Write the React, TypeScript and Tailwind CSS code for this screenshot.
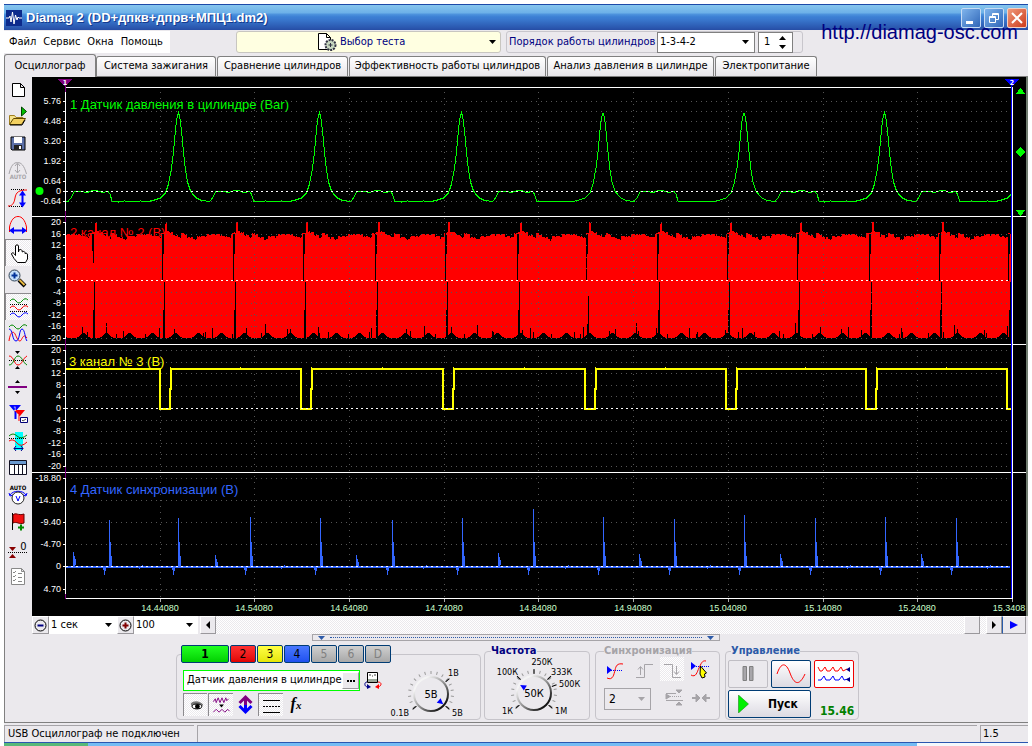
import { useState, type ReactNode } from 'react'

const UI = "font-['DejaVu_Sans_Condensed','DejaVu_Sans',sans-serif]"
const DITHER = 'bg-[conic-gradient(#fff_25%,#ebe9ed_0_50%,#fff_0_75%,#ebe9ed_0)] bg-[length:2px_2px]'
const UI_FONT = '"DejaVu Sans Condensed", "DejaVu Sans", sans-serif'
const CHART_FONT = '"Liberation Sans", Arial, sans-serif'

// ---- signals ----

const GREEN_PEAKS = [37, 178.5, 319.5, 461.5, 603, 744, 884.5, 1025.5]

// one engine cycle, offsets are relative to the pressure peak
const GREEN_CYCLE: [number, number][] = [
  [-66, 201], [-60, 202], [-54, 201], [-46, 202], [-38, 201], [-30, 201.5], [-24, 200], [-18, 198],
  [-13, 193], [-10, 184], [-7, 168], [-5, 152], [-3, 130], [-2, 121], [-1, 116], [0, 113],
  [1, 116], [2, 122], [3, 131], [5, 152], [7, 170], [9, 182], [12, 191],
  [15, 195], [18, 198], [23, 200.5], [31, 201.5], [34, 198], [37, 192], [40, 191.5], [47, 192],
  [50, 192.5], [56, 190.5], [60, 190.5], [65, 192.5], [71, 191.5], [73, 194], [75, 201],
]

const greenPath = GREEN_PEAKS.map((p) => GREEN_CYCLE.map(([dx, y]) => `${p + dx},${y}`).join(' ')).join(' ')

const SPARKS = [95, 165, 236, 306, 378, 448, 520, 589, 660, 730, 800, 872, 942, 1011]

const RED_TOP: [number, number][] = [
  [0, 222], [2, 231], [4, 232], [8, 235], [13, 237], [16, 233], [19, 234], [22, 237], [28, 239],
  [32, 236], [36, 236], [42, 234], [52, 234], [57, 236], [62, 237], [66, 233], [69, 232],
]

function redTopAt(x: number) {
  let s = 24
  for (const v of SPARKS) if (v <= x) s = v
  const off = x - s
  let y = 236
  for (const [dx, v] of RED_TOP) if (off >= dx) y = v
  return y + ((x * 7) % 5 === 0 ? 1 : 0) + ((x * 13) % 11 === 0 ? 1 : 0)
}

function redBottomAt(x: number) {
  const phase = (((x - 95) % 23) + 23) % 23
  let y = 338
  if (phase > 4 && phase < 18) y = 338 - [1, 1, 2, 3, 4, 5, 5, 5, 4, 3, 2, 1, 1][phase - 5]
  if ((x * 37) % 53 === 0) y -= 10
  if ((x * 17) % 29 === 0) y -= 4
  if ((x * 23) % 41 === 0) y -= 6
  return y
}

const redColumns = Array.from({ length: 945 }, (_, i) => {
  const x = 66 + i
  const top = redTopAt(x)
  return `M${x} ${top}h1V${redBottomAt(x)}h-1z`
}).join('')

const BLUE_SPIKES: [number, number][] = [
  [109, 520], [178, 518], [250, 517], [320, 518], [392, 520], [462, 518], [533, 509], [603, 517],
  [674, 519], [744, 515], [815, 518], [885, 517], [956, 518],
]
const BLUE_BUMPS: [number, number][] = [
  [73, 552], [215, 555], [356, 555], [498, 553], [639, 554], [780, 554], [921, 554],
]
const BLUE_NOTCHES = [142, 284, 426, 568, 710, 850, 990]
const bluePath =
  BLUE_SPIKES.map(([x, y]) => `M${x} 567V${y}h1V542h1V556h1V567zM${x - 6} 567v3h1v5h1v-4h1v-4z`).join('') +
  BLUE_BUMPS.map(([x, y]) => `M${x} 567V${y}h1v4h1v3h1v5z`).join('') +
  BLUE_NOTCHES.map((x) => `M${x} 567v-2h1v2zM${x - 3} 567v2h1v-2z`).join('')

const YELLOW_DROPS = [160, 301, 443, 585, 726, 866, 1007]
const yellowPath =
  'M66 369' +
  YELLOW_DROPS.map((x) => {
    const lead = `L${x - 60} 369V368.5L${x - 50} 369H${x}V408.5`
    return x > 1000 ? `${lead}h4` : `${lead}h10V389h1V368.5L${x + 30} 369`
  }).join('')

const twentyScale = (zero: number) =>
  [20, 16, 12, 8, 4, 0, -4, -8, -12, -16, -20].map((v) => ({ text: String(v), y: Math.round(zero - v * 2.9) }))

const AXES = [
  {
    labels: [
      { text: '5.76', y: 101 }, { text: '4.48', y: 121 }, { text: '3.20', y: 141 }, { text: '1.92', y: 161 },
      { text: '0.64', y: 181 }, { text: '0', y: 191 }, { text: '-0.64', y: 201 },
    ],
    rows: [101, 111, 121, 131, 141, 151, 161, 171, 181, 191, 201],
    zero: 191,
  },
  { labels: twentyScale(280), rows: twentyScale(280).map((l) => l.y), zero: 280 },
  { labels: twentyScale(408), rows: twentyScale(408).map((l) => l.y), zero: 408 },
  {
    labels: [
      { text: '-18.80', y: 478 }, { text: '-14.10', y: 500 }, { text: '-9.40', y: 522 },
      { text: '-4.70', y: 544 }, { text: '0', y: 566 }, { text: '4.70', y: 589 },
    ],
    rows: [478, 500, 522, 544, 566, 589],
    zero: 566,
  },
]

const TIMES = [
  { x: 160, text: '14.44080' }, { x: 254, text: '14.54080' }, { x: 349, text: '14.64080' },
  { x: 444, text: '14.74080' }, { x: 538, text: '14.84080' }, { x: 633, text: '14.94080' },
  { x: 728, text: '15.04080' }, { x: 823, text: '15.14080' }, { x: 917, text: '15.24080' },
]

function Scope() {
  return (
    <svg viewBox="32 77 994 539" className="block w-full h-auto bg-black" shapeRendering="crispEdges">
      <rect x="32" y="77" width="994" height="539" fill="#000" />

      <g fontFamily={CHART_FONT} fontSize="13">
        <text x="70" y="109" fill="#00ff00">1 Датчик давления в цилиндре (Bar)</text>
        <text x="70" y="237" fill="#ff0000">2 канал № 2 (В)</text>
        <text x="69" y="366" fill="#ffff00">3 канал № 3 (В)</text>
        <text x="70" y="494" fill="#3366ff">4 Датчик синхронизации (В)</text>
      </g>

      <path d={redColumns} fill="#ff0000" />
      <g fill="#000">
        {SPARKS.map((s, i) => (
          <path
            key={s}
            d={
              i === 0
                ? 'M92 234h2v29h-1v-12h-1zM94 282h1v56h-2v-28h1z'
                : `M${s - 3} 234h2v20h-1v27h-1zM${s - 1} ${i === 7 ? 296 : 282}h1v56h-2v-28h1z`
            }
          />
        ))}
      </g>

      <g stroke="#555" strokeWidth="1">
        {AXES.flatMap((a) => a.rows).map((y) => (
          <path key={y} d={`M71 ${y + 0.5}H1010`} strokeDasharray="1 4" />
        ))}
        {TIMES.map((t) => (
          <path key={t.x} d={`M${t.x + 0.5} 92V597`} strokeDasharray="1 5" />
        ))}
      </g>

      <clipPath id="plot"><rect x="66" y="88" width="945" height="510" /></clipPath>
      <polyline points={greenPath} clipPath="url(#plot)" fill="none" stroke="#00ff00" strokeWidth="1" />
      <path d={yellowPath} clipPath="url(#plot)" fill="none" stroke="#ffff00" strokeWidth="2" />
      <path d={bluePath} fill="#3366ff" />
      <path d="M66 567H1010" stroke="#3366ff" strokeWidth="2" />

      {AXES.map((a) => (
        <path key={a.zero} d={`M66 ${a.zero + 0.5}H1011`} stroke="#fff" strokeDasharray="2 3" />
      ))}

      <g stroke="#fff">
        <path d="M65 87.5H1012M32 216.5H1026M32 344.5H1026M32 472.5H1026M65 598.5H1013" />
        <path d="M65.5 87V598M1012.5 87V598" />
        {AXES.flatMap((a) => a.rows).map((y) => (
          <path key={y} d={`M63 ${y + 0.5}h3`} />
        ))}
      </g>
      <g stroke="#aaa">
        {TIMES.map((t) => <path key={t.x} d={`M${t.x + 0.5} 599v3`} />)}
        <path d="M1012.5 599v3" />
      </g>

      {/* cursors */}
      <path d="M65.5 86V92M65.5 211V222M65.5 339V350M65.5 467V478M65.5 594V599" stroke="#800080" />
      <path d="M58 79h14l-7 8z" fill="#800080" />
      <path d="M1011.5 86V598" stroke="#0000ff" />
      <path d="M1004 79h15l-7 8z" fill="#0000ff" />
      <g fontFamily={UI_FONT} fontSize="7" fontWeight="bold" fill="#fff" textAnchor="middle">
        <text x="65" y="85">1</text>
        <text x="1012" y="85">2</text>
      </g>

      <g fontFamily={CHART_FONT} fontSize="9" fill="#fff" textAnchor="end">
        {AXES.flatMap((a) => a.labels).map((l) => (
          <text key={l.y} x="61" y={l.y + 3}>{l.text}</text>
        ))}
      </g>
      <g fontFamily={CHART_FONT} fontSize="9" fill="#ccffcc" textAnchor="middle">
        {TIMES.map((t) => <text key={t.x} x={t.x} y="611">{t.text}</text>)}
        <text x="1009" y="611">15.3408</text>
      </g>

      <g fill="#00ff00">
        <circle cx="39.5" cy="191" r="4" shapeRendering="auto" />
        <path d="M1020.5 88l5 6h-10zM1020.5 147l5 5-5 5-5-5zM1020.5 216l5-6h-10z" />
      </g>
    </svg>
  )
}

// ---- left toolbar ----

const dots = { stroke: '#000', strokeDasharray: '1 1' }

const TOOLS: { name: string; pressed?: boolean; icon: ReactNode }[] = [
  { name: 'Новый', icon: <path d="M7.5 6.5h8l4 4v9h-12zM15.5 6.5v4h4" fill="#fff" stroke="#000" /> },
  {
    name: 'Открыть',
    icon: (
      <>
        <path d="M4.5 20V11.5h5l1.500 2h7v3" fill="#f6e38c" stroke="#a08020" />
        <path d="M4.5 20.5l4-6h12l-4 6z" fill="#f2d060" stroke="#604800" />
        <path d="M5 21h12l3-5" fill="none" stroke="#000" />
        <path d="M16.5 3v9l5-4.500z" fill="#00c000" stroke="#004000" />
      </>
    ),
  },
  {
    name: 'Сохранить',
    icon: (
      <>
        <path d="M6 6h14v13H7l-1-1z" fill="#5c70a8" stroke="#000" />
        <path d="M9 6h8v6H9z" fill="#fff" />
        <path d="M9 14h8v5H9z" fill="#222" />
        <path d="M14 15h2v3h-2z" fill="#fff" />
      </>
    ),
  },
  {
    name: 'Авто',
    icon: (
      <>
        <path d="M4 16C6 7 9 4.5 12.5 4.5S19 7 21.5 16M12.5 6v9M10 8l2.5-3 2.5 3M10 12l2.5 3 2.5-3" fill="none" stroke="#a8a6aa" />
        <text x="13" y="21" fontSize="6" fontWeight="bold" textAnchor="middle" fill="#a8a6aa">AUTO</text>
      </>
    ),
  },
  {
    name: 'Амплитуда',
    icon: (
      <>
        <path d="M6 4.5h14M4 21.5h14" {...dots} />
        <path d="M3 21c4 0 6-2 7-8s4-8 12-8" fill="none" stroke="#f00" />
        <path d="M17.5 8v12" stroke="#00f" strokeWidth="2" />
        <path d="M14 10.5l3.5-5 3.5 5zM14 17.5l3.5 5 3.5-5z" fill="#00f" />
      </>
    ),
  },
  {
    name: 'Период',
    icon: (
      <>
        <path d="M4.5 20v-5C6 8 9 4.5 13 4.5S20 8 21.5 15v5" fill="none" stroke="#f00" />
        <path d="M7 18.5h12" stroke="#00f" strokeWidth="2" />
        <path d="M9 15l-5 3.5 5 3.5zM17 15l5 3.5-5 3.5z" fill="#00f" />
      </>
    ),
  },
  {
    name: 'Рука',
    pressed: true,
    icon: (
      <path
        d="M10.5 16.5V7c0-1.500 3-1.500 3 0v6l.5-2c1-.8 2.500-.5 3 .5l.3 1.500c1-1 2.200-.7 2.700.5v1c1.500-.8 2.500 0 2.500 1.500V20l-2 3.500h-8L9 19.500 6.500 15c0-1.500 2-1.500 2.500-.5z"
        fill="#fff"
        stroke="#000"
      />
    ),
  },
  {
    name: 'Лупа',
    icon: (
      <>
        <path d="M14 14l6 6" stroke="#000" strokeWidth="4" />
        <path d="M14.5 14l5 5" stroke="#e8b840" strokeWidth="2" />
        <circle cx="9.5" cy="9.5" r="5.5" fill="#c4e0fa" stroke="#345" />
        <path d="M6.5 9.5h6M9.5 6.5v6" stroke="#039" strokeWidth="2" />
      </>
    ),
  },
  {
    name: 'Раздельно',
    pressed: true,
    icon: (
      <g fill="none">
        <path d="M5 8q3-4 6 0t6 0 6-1" stroke="#080" />
        <path d="M5 15q3-4 6 0t6 0 6-1" stroke="#f00" />
        <path d="M5 22q3-4 6 0t6 0 6-1" stroke="#00f" />
        <path d="M5 11.5h18M5 18.5h18" {...dots} />
      </g>
    ),
  },
  {
    name: 'Совместно',
    icon: (
      <g fill="none">
        <path d="M4 7q3-4 6 0t6 0 6-1" stroke="#080" />
        <path d="M4 21c1-8 4-11 6-7s3 7 5 7 3-9 7-3" stroke="#f00" />
        <path d="M4 9c4 0 3 12 7 12s3-12 6-12 3 10 5 12" stroke="#00f" />
      </g>
    ),
  },
  {
    name: 'Симметрия',
    icon: (
      <>
        <path d="M10 4h5l-2.500 3zM10 22h5l-2.500-3z" />
        <path d="M4 13.5h18" {...dots} />
        <path d="M4 9c5 0 5 9 9 9s5-7 9-9" fill="none" stroke="#f00" />
        <path d="M4 18c5 0 5-9 9-9s5 7 9 9" fill="none" stroke="#080" />
      </>
    ),
  },
  {
    name: 'Линия',
    icon: (
      <>
        <path d="M10 9h5l-2.500-3zM10 17h5l-2.500 3z" />
        <path d="M3 13h19" stroke="#800080" strokeWidth="2" />
      </>
    ),
  },
  {
    name: 'Курсоры',
    icon: (
      <>
        <path d="M4 4h12l-6 7zM9.5 9h2v9h-2z" fill="#00f" />
        <path d="M9 9h11l-5 6zM13.5 14h1v6h-1z" fill="#f00" />
        <text x="10" y="9.5" fontSize="6" fill="#fff" textAnchor="middle">1</text>
        <path d="M15.5 16.5h7v5h-7z" fill="#fff" stroke="#007" />
        <path d="M17 19l1 1 3-2" fill="none" stroke="#555" />
      </>
    ),
  },
  {
    name: 'Интервал',
    icon: (
      <>
        <path d="M10 4h8v18h-8z" fill="#0ff" />
        <path d="M4 8q4-4 8 0t10-1" fill="none" stroke="#080" />
        <path d="M4 10.5h18" {...dots} />
        <path d="M4 13q4-3 8 2t10-1" fill="none" stroke="#f00" />
        <path d="M9 20.5h9M11 18l-2 2.500 2 2.500M16 18l2 2.500-2 2.500" fill="none" stroke="#008" />
      </>
    ),
  },
  {
    name: 'Таблица',
    icon: (
      <>
        <path d="M4.5 5.5h17v14h-17z" fill="#fff" stroke="#112" />
        <path d="M5 6h16v3H5z" fill="#6a9ad0" />
        <path d="M4 9.5h18M9.5 9v10M13.5 9v10M17.5 9v10" stroke="#112" />
      </>
    ),
  },
  {
    name: 'Авто вольты',
    icon: (
      <>
        <text x="13" y="8" fontSize="6" fontWeight="bold" textAnchor="middle">AUTO</text>
        <path d="M5 13c3-5 13-5 16 0M4 11l1 3 3-1M22 11l-1 3-3-1" fill="none" stroke="#00f" />
        <circle cx="13" cy="16" r="6" fill="#fff" stroke="#222" />
        <path d="M11 14l2 5 2-5" fill="none" stroke="#00f" />
      </>
    ),
  },
  {
    name: 'Флаг',
    icon: (
      <>
        <path d="M7.5 4v17" stroke="#000" />
        <path d="M8 6c3-3 5 1 11-1v9c-5 2-7-2-11 0z" fill="#f01010" stroke="#600" />
        <path d="M13 18.5h6M16 15.5v6" stroke="#080" strokeWidth="2" />
      </>
    ),
  },
  {
    name: 'Ноль',
    icon: (
      <>
        <path d="M4 11h7l-3.500 4zM4 22h7l-3.500-4z" fill="#800" />
        <path d="M3 16.5h19" {...dots} />
        <text x="18.5" y="14" fontSize="11" textAnchor="middle">0</text>
      </>
    ),
  },
  {
    name: 'Список',
    icon: (
      <>
        <path d="M6.5 5.5h10l3 3v13h-13zM16.5 5.5v3h3" fill="#fff" stroke="#888" />
        <path d="M8 9l1 1 2-2M8 13l1 1 2-2M8 17l1 1 2-2M13 10.5h4M13 14.5h4M13 18.5h4" fill="none" stroke="#888" />
      </>
    ),
  },
]

function Toolbar() {
  return (
    <div className="flex w-[27px] shrink-0 flex-col">
      {TOOLS.map((t) => (
        <button
          key={t.name}
          aria-label={t.name}
          className={
            t.pressed
              ? `h-[27px] w-[26px] border-l border-t border-[#8c8a8e] ${DITHER}`
              : 'h-[27px] w-[27px]'
          }
        >
          <svg viewBox="0 0 27 27" className={t.pressed ? '-ml-px -mt-px block size-[27px]' : 'block size-[27px]'}>{t.icon}</svg>
        </button>
      ))}
    </div>
  )
}

// ---- top ----

function TitleBar() {
  return (
    <header className="flex h-[26px] items-center border-t border-[#1c4aa8] bg-[linear-gradient(#86c6ee_0px,#6cb0e8_8px,#4f95de_9px,#3b7fd4_12px,#3a7ad0_14px,#2a56ae_23px,#2448a0_26px)] pl-[2px] pr-px">
      <svg viewBox="0 0 16 16" className="size-4 shrink-0">
        <path d="M0 0h16v16H0z" fill="#0c2a8c" />
        <path d="M0 8h3l1-2 1 6 1.500-10 1.500 12 1.500-9 1.500 5 1-3 1 1h3" fill="none" stroke="#fff" />
      </svg>
      <h1 className="ml-[4px] flex-1 whitespace-nowrap text-[13px] font-bold text-white font-['Liberation_Sans',Arial,sans-serif] [text-shadow:1px_1px_0_#123a90]">
        Diamag 2 (DD+дпкв+дпрв+МПЦ1.dm2)
      </h1>
      <div className="flex gap-[3px]">
        <button aria-label="Свернуть" className="grid size-5 place-items-center rounded-[2px] border border-[#c8dcf4] bg-[linear-gradient(135deg,#7fb4ec,#2f66b8)]">
          <svg viewBox="0 0 18 18" className="size-[18px]"><path d="M4 12h7v3H4z" fill="#fff" /></svg>
        </button>
        <button aria-label="Восстановить" className="grid size-5 place-items-center rounded-[2px] border border-[#c8dcf4] bg-[linear-gradient(135deg,#7fb4ec,#2f66b8)]">
          <svg viewBox="0 0 18 18" className="size-[18px]">
            <path d="M7.5 7V4.5h6v6H11M4.5 7.5h6v6h-6zM4 8.500h7M7 5.500h7" fill="none" stroke="#fff" />
          </svg>
        </button>
        <button aria-label="Закрыть" className="grid size-5 place-items-center rounded-[2px] border border-[#f4d0c4] bg-[linear-gradient(135deg,#f09a7c,#cc3c1c)]">
          <svg viewBox="0 0 18 18" className="size-[18px]"><path d="M4 4l10 10M14 4L4 14" stroke="#fff" strokeWidth="2" /></svg>
        </button>
      </div>
    </header>
  )
}

function Caret({ className = '', fill = '#000' }: { className?: string; fill?: string }) {
  return (
    <svg viewBox="0 0 7 4" className={`pointer-events-none h-1 w-[7px] shrink-0 ${className}`}>
      <path d="M0 0h7L3.500 4z" fill={fill} />
    </svg>
  )
}

function MenuRow() {
  const [order, setOrder] = useState('1-3-4-2')
  return (
    <div className="flex h-6 items-start pt-px">
      <nav className="flex h-[22px] w-[166px] items-center gap-[7px] bg-white pl-[5px] text-[11px]">
        {['Файл', 'Сервис', 'Окна', 'Помощь'].map((m) => (
          <button key={m}>{m}</button>
        ))}
      </nav>
      <div className="ml-[66px] flex h-[22px] w-[265px] items-center rounded-[3px] border border-[#c8c6c0] bg-[#ffffe1] pl-[80px] pr-1">
        <svg viewBox="0 0 20 20" className="size-5 shrink-0">
          <path d="M1.5 1.5h8l4 4v12h-12zM9.5 1.5v4h4" fill="#fff" stroke="#000" />
          <circle cx="13.5" cy="13" r="5" fill="#c8d8c0" stroke="#334" strokeWidth="2" strokeDasharray="2 1" />
          <circle cx="13.5" cy="13" r="3.5" fill="#c8d8c0" />
          <path d="M13.5 11v4M11.5 13h4" stroke="#334" />
        </svg>
        <select aria-label="Выбор теста" className="ml-[3px] min-w-0 flex-1 appearance-none bg-transparent text-[11px] text-[#000080]">
          <option>Выбор теста</option>
        </select>
        <Caret />
      </div>
      <div className="ml-[5px] flex h-[22px] w-[297px] items-center rounded-[3px] border border-[#c8c6cc] pl-[2px]">
        <label htmlFor="order" className="w-[148px] whitespace-nowrap text-[11px] text-[#000080]">
          Порядок работы цилиндров
        </label>
        <div className="flex h-[21px] w-[98px] items-center border border-[#808080] bg-white pr-[5px]">
          <select id="order" value={order} onChange={(e) => setOrder(e.target.value)} className="min-w-0 flex-1 appearance-none bg-transparent pl-[2px] text-[11px]">
            <option>1-3-4-2</option>
            <option>1-2-4-3</option>
          </select>
          <Caret />
        </div>
        <div className="ml-[3px] flex h-[21px] w-[35px] items-center border border-[#808080] bg-white pr-[6px]">
          <input aria-label="Цилиндр" defaultValue="1" className="w-0 min-w-0 flex-1 pl-[5px] text-[11px]" />
          <svg viewBox="0 0 7 13" className="h-[13px] w-[7px] shrink-0">
            <path d="M0 4h7L3.500 0zM0 9h7l-3.500 4z" />
          </svg>
        </div>
      </div>
    </div>
  )
}

const TABS = [
  { text: 'Система зажигания', width: 'w-[120px]' },
  { text: 'Сравнение цилиндров', width: 'w-[131px]' },
  { text: 'Эффективность работы цилиндров', width: 'w-[197px]' },
  { text: 'Анализ давления в цилиндре', width: 'w-[167px]' },
  { text: 'Электропитание', width: 'w-[102px]' },
]

function Tabs() {
  return (
    <div role="tablist" className="flex h-[23px] items-end text-[11px]">
      <button role="tab" aria-selected="true" className="h-[23px] w-[92px] whitespace-nowrap rounded-t-[3px] border border-b-0 border-[#808080] bg-[#ebe9ed]">
        Осциллограф
      </button>
      <div className="flex h-[21px] flex-1 gap-px border-b border-[#808080]">
        {TABS.map((t) => (
          <button
            key={t.text}
            role="tab"
            aria-selected="false"
            className={`h-[20px] ${t.width} whitespace-nowrap rounded-t-[3px] border border-b-0 border-[#808080] bg-linear-to-b from-white to-[#e8e6ea]`}
          >
            {t.text}
          </button>
        ))}
      </div>
    </div>
  )
}

// ---- bottom ----

const RAISED = 'border border-t-white border-l-white border-r-[#9a989c] border-b-[#9a989c] bg-[#ebe9ed]'

function ScrollRow() {
  return (
    <div className="flex h-[18px] bg-[#ebe9ed] pr-[2px]">
      <button aria-label="Сжать" className={`grid w-[17px] place-items-center ${RAISED}`}>
        <svg viewBox="0 0 13 13" className="size-[13px]">
          <circle cx="6.5" cy="6.5" r="5.5" fill="none" stroke="#000" />
          <path d="M3.5 6.5h6" stroke="#000080" strokeWidth="2" />
        </svg>
      </button>
      <div className="flex w-[68px] items-center bg-white pr-[5px]">
        <select aria-label="Время" className="min-w-0 flex-1 appearance-none pl-[2px] text-[11px]"><option>1 сек</option></select>
        <Caret />
      </div>
      <button aria-label="Растянуть" className={`grid w-[17px] place-items-center ${RAISED}`}>
        <svg viewBox="0 0 13 13" className="size-[13px]">
          <circle cx="6.5" cy="6.5" r="5.5" fill="none" stroke="#000" />
          <path d="M3.5 6.5h6M6.5 3.5v6" stroke="#800000" strokeWidth="2" />
        </svg>
      </button>
      <div className="flex w-[64px] items-center bg-white pr-[5px]">
        <select aria-label="Масштаб" className="min-w-0 flex-1 appearance-none pl-[2px] text-[11px]"><option>100</option></select>
        <Caret />
      </div>
      <button aria-label="Влево" className={`ml-[2px] grid w-[16px] place-items-center ${RAISED}`}>
        <svg viewBox="0 0 4 8" className="h-2 w-1"><path d="M4 0v8L0 4z" /></svg>
      </button>
      <div className={`flex flex-1 justify-end pr-[6px] ${DITHER}`}>
        <button aria-label="Ползунок" className={`w-[16px] ${RAISED}`} />
      </div>
      <button aria-label="Вправо" className={`grid w-[16px] place-items-center ${RAISED}`}>
        <svg viewBox="0 0 4 8" className="h-2 w-1"><path d="M0 0v8l4-4z" /></svg>
      </button>
      <button aria-label="В конец" className="grid w-[24px] place-items-center border border-b-[#9a989c] border-l-[#2a5caa] border-r-[#9a989c] border-t-white bg-[#ebe9ed]">
        <svg viewBox="0 0 8 8" className="size-2"><path d="M0 0v8l8-4z" fill="#00f" /></svg>
      </button>
    </div>
  )
}

const CHANNELS = [
  { text: '1', style: 'w-[48px] font-bold bg-linear-to-b from-[#20ff20] to-[#00d000]' },
  { text: '2', style: 'w-[26px] bg-linear-to-b from-[#ff3030] to-[#e00000]' },
  { text: '3', style: 'w-[26px] bg-linear-to-b from-[#ffff40] to-[#e6e600]' },
  { text: '4', style: 'w-[26px] bg-linear-to-b from-[#4a78ff] to-[#2050f0]' },
  { text: '5', style: 'w-[26px] text-[#808080] bg-linear-to-b from-[#d0d0d0] to-[#a8a8a8]' },
  { text: '6', style: 'w-[26px] text-[#808080] bg-linear-to-b from-[#d0d0d0] to-[#a8a8a8]' },
  { text: 'D', style: 'w-[26px] text-[#808080] bg-linear-to-b from-[#d0d0d0] to-[#a8a8a8]' },
]

interface KnobProps {
  value: string
  marks: { text: string; x: number; y: number; anchor: 'start' | 'middle' | 'end' }[]
  ticks: number[]
  pointer: number
  label: string
}

// knob face is centred on 0,0; angles are degrees clockwise from twelve o'clock
function Knob({ value, marks, ticks, pointer, label }: KnobProps) {
  const minor = Array.from({ length: 17 }, (_, i) => -128 + i * 16)
  return (
    <svg viewBox="-49 -37 98 65" className="h-[65px] w-[98px]" role="img" aria-label={label}>
      <defs>
        <linearGradient id="rim" x1="0" y1="0" x2="1" y2="1">
          <stop offset="0.2" stopColor="#f4f4f4" />
          <stop offset="0.6" stopColor="#777" />
          <stop offset="0.9" stopColor="#000" />
        </linearGradient>
      </defs>
      {minor.map((a) => <path key={a} d="M0 -20v-3" transform={`rotate(${a})`} stroke="#999" />)}
      {ticks.map((a) => <path key={a} d="M0 -19v-5" transform={`rotate(${a})`} stroke="#000" />)}
      <circle r="17" fill="#ebe9ed" stroke="url(#rim)" strokeWidth="2" />
      <path d="M0 -16l3 6h-6z" transform={`rotate(${pointer})`} fill="#00f" />
      <g fontFamily={UI_FONT}>
        <text y="4" fontSize="11" textAnchor="middle">{value}</text>
        {marks.map((m) => (
          <text key={m.text} x={m.x} y={m.y} textAnchor={m.anchor} fontSize="9">{m.text}</text>
        ))}
      </g>
    </svg>
  )
}

function ChannelGroup() {
  return (
    <fieldset className="flex h-[75px] w-[304px] rounded-[4px] border border-[#c6c4ca] pl-[4px]">
      <legend className="flex gap-px text-[12px]">
        {CHANNELS.map((c) => (
          <button key={c.text} className={`h-[18px] rounded-[2px] border border-[#003c74] leading-[16px] ${c.style}`}>
            {c.text}
          </button>
        ))}
      </legend>
      <div className="flex items-start">
        <div className="flex flex-col pl-[2px] pt-[7px]">
          <div className="flex items-center">
            <div className="flex h-[21px] w-[177px] items-center border border-[#00ff00] bg-white">
              <input aria-label="Название канала" defaultValue="Датчик давления в цилиндре" className="w-0 min-w-0 flex-1 pl-[3px] text-[11px]" />
              <button aria-label="Выбрать датчик" className={`grid size-[17px] place-items-center ${RAISED}`}>
                <svg viewBox="0 0 8 2" className="h-[2px] w-2"><path d="M0 0h2v2H0zM3 0h2v2H3zM6 0h2v2H6z" /></svg>
              </button>
            </div>
            <button aria-label="Прибор" className="ml-[4px]">
              <svg viewBox="0 0 18 19" className="h-[19px] w-[18px]" fill="none">
                <path d="M3.5 1.5h10v10h-10z" fill="#fff" stroke="#000" />
                <path d="M4 8h9v3H4z" fill="#9aa89a" />
                <path d="M5 4h2M8 5h1M10 4h2" stroke="#444" />
                <path d="M3 11C0 11 0 16 4 16" stroke="#008" />
                <path d="M3 13l4 3-4 2z" fill="#008" />
                <path d="M14 11c4 0 4 4 0 5" stroke="#f00" />
                <path d="M15 13l-4 3 4 2z" fill="#f00" />
              </svg>
            </button>
          </div>
          <div className="mt-[2px] flex">
            <button aria-label="Показать" className={`h-[23px] w-[24px] border-l border-t border-[#8c8a8e] ${DITHER}`}>
              <svg viewBox="0 0 24 23" className="h-[22px] w-[23px]">
                <path d="M7 10c3-4 10-3 13 1l-2 4c-4 2-8 1-10-2z" fill="#777" />
                <ellipse cx="13.5" cy="13" rx="5" ry="2.5" fill="#fff" stroke="#000" />
                <circle cx="14" cy="13" r="2.5" />
              </svg>
            </button>
            <button aria-label="Фильтр" className={`ml-px h-[23px] w-[25px] border-l border-t border-[#8c8a8e] ${DITHER}`}>
              <svg viewBox="0 0 24 23" className="h-[22px] w-[24px]" fill="none">
                <path d="M4 8l2-3 1 4 2-5 2 5 2-5 2 5 2-5 1 3 2-2" stroke="#800080" />
                <path d="M10 11h5l-2.500 3z" fill="#000" />
                <path d="M4 19l3-3 3 3 3-3 3 3 3-3 2 2" stroke="#800080" />
              </svg>
            </button>
            <button aria-label="Инверсия" className="w-[25px]">
              <svg viewBox="0 0 25 23" className="h-[23px] w-[25px]" fill="none" strokeWidth="3">
                <path d="M12.5 12V5M6.500 10l6-6 6 6" stroke="#800080" />
                <path d="M12.5 12v7M6.500 13l6 6 6-6" stroke="#00f" />
              </svg>
            </button>
            <button aria-label="Сетка" className={`h-[23px] w-[25px] border-l border-t border-[#8c8a8e] ${DITHER}`}>
              <svg viewBox="0 0 24 22" className="h-[22px] w-[24px]" stroke="#000" shapeRendering="crispEdges">
                <path d="M4 6.5h17M4 18.5h17" />
                <path d="M4 12.5h17" strokeDasharray="2 1" />
              </svg>
            </button>
            <button aria-label="Функция" className="w-[26px] font-['Liberation_Serif',serif] text-[16px] font-bold italic leading-[20px]">
              f<span className="text-[11px]">x</span>
            </button>
          </div>
        </div>
        <div className="-mt-[6px]">
          <Knob
            label="Диапазон"
            value="5В"
            pointer={130}
            ticks={[-130, 50, 130]}
            marks={[
              { text: '1В', x: 17, y: -18, anchor: 'start' },
              { text: '0.1В', x: -22, y: 22, anchor: 'end' },
              { text: '5В', x: 21, y: 22, anchor: 'start' },
            ]}
          />
        </div>
      </div>
    </fieldset>
  )
}

function SyncGroup() {
  return (
    <fieldset className="h-[75px] w-[125px] rounded-[4px] border border-[#c6c4ca] pl-[8px]">
      <legend className="text-[11px] font-bold leading-[12px] text-[#a6a4a8]">Синхронизация</legend>
      <div className="flex h-[24px] gap-[4px]">
        <button aria-label="Уровень">
          <svg viewBox="0 0 24 24" className="size-6" fill="none">
            <path d="M3 9v8l5-4z" fill="#00f" />
            <path d="M7 13.5h12" stroke="#00f" strokeDasharray="1 1" />
            <path d="M3 21c6 3 7-4 8-8s2-7 8-6" stroke="#f00" />
          </svg>
        </button>
        <button aria-label="По фронту">
          <svg viewBox="0 0 24 24" className="size-6" fill="none" stroke="#a6a4a8">
            <path d="M4 20.5h8.5v-13H21M8.5 18v-8M6 12.5l2.500-3 2.500 3" />
          </svg>
        </button>
        <button aria-label="По спаду" className={DITHER}>
          <svg viewBox="0 0 24 24" className="size-6" fill="none" stroke="#a6a4a8">
            <path d="M4 7.5h8.5v13H21M16.5 9v8M14 14.5l2.500 3 2.500-3" />
          </svg>
        </button>
        <button aria-label="Выбор уровня">
          <svg viewBox="0 0 24 24" className="size-6" fill="none">
            <path d="M3 5v8l5-4z" fill="#00f" />
            <path d="M8 9.5h13" stroke="#00f" strokeDasharray="1 1" />
            <path d="M3 18c5 3 6-3 8-7s3-8 7-7" stroke="#f00" />
            <path d="M12.5 9l6 7-2 1 .5 3-3 1-2-4z" fill="#ff0" stroke="#000" />
          </svg>
        </button>
      </div>
      <div className="mt-[7px] flex items-center">
        <div className="flex h-[22px] w-[47px] items-center border border-[#a6a4a8] pr-[5px]">
          <select aria-label="Канал синхронизации" disabled className="min-w-0 flex-1 appearance-none bg-transparent pl-[4px] text-[12px]"><option>2</option></select>
          <Caret fill="#a6a4a8" />
        </div>
        <svg viewBox="0 0 50 20" className="ml-[10px] h-5 w-[50px]" fill="#a6a4a8" stroke="#a6a4a8">
          <path d="M5 5v5l4-2.500zM15 1h6l-3 3zM15 16h6l-3-3z" />
          <path d="M5 4.5h10M5 11.5h17" fill="none" />
          <path d="M9 7.5h12" strokeDasharray="1 1" fill="none" />
          <path d="M31 9h6M43 9h6" strokeWidth="2" />
          <path d="M35 5l4 4-4 4zM45 5l-4 4 4 4z" />
        </svg>
      </div>
    </fieldset>
  )
}

function ControlGroup() {
  return (
    <fieldset className="h-[75px] w-[134px] rounded-[4px] border border-[#c6c4ca] pl-[2px]">
      <legend className="ml-[3px] text-[11px] font-bold leading-[12px] text-[#2c5aa8]">Управление</legend>
      <div className="flex gap-[3px] pt-[3px]">
        <button aria-label="Пауза" className="grid h-[28px] w-[40px] place-items-center rounded-[2px] border border-[#c0bec4]">
          <svg viewBox="0 0 12 16" className="h-4 w-3"><path d="M1 .5h3.500v14H1zM7.500 .5H11v14H7.500z" fill="#a8a6aa" stroke="#808080" /></svg>
        </button>
        <button aria-label="Однократно" className="grid h-[28px] w-[40px] place-items-center rounded-[2px] border border-[#003c74] bg-linear-to-b from-white to-[#dcdae2]">
          <svg viewBox="0 0 30 20" className="h-5 w-[30px]"><path d="M1 10C5-2 10-2 14 9s9 14 15 1" fill="none" stroke="#f00" /></svg>
        </button>
        <button aria-label="Непрерывно" className="grid h-[28px] w-[40px] place-items-center rounded-[2px] border border-[#f00000] bg-white">
          <svg viewBox="0 0 34 18" className="h-[18px] w-[34px]" fill="none">
            <path d="M1 2l2 4h2l3-4 2 4h3l3-4 2 4h3l3-4 2 4 4-2" stroke="#f00" />
            <path d="M1 15h3l3-4 2 4h4l3-4 2 4h4l3-4 2 4 4-1" stroke="#00f" />
            <path d="M33 2v5l-4-2.500zM33 12v5l-4-2.500z" fill="#008" />
          </svg>
        </button>
      </div>
      <div className="mt-[2px] flex items-end">
        <button className="flex h-[28px] w-[83px] items-center rounded-[2px] border border-[#003c74] bg-linear-to-b from-white to-[#dcdae2] pl-[9px] text-[12px] font-bold">
          <svg viewBox="0 0 11 18" className="mr-[19px] h-[18px] w-[11px]"><path d="M.5 0v18l10-9z" fill="#00f000" stroke="#087808" strokeWidth=".5" /></svg>
          Пуск
        </button>
        <output className="ml-[9px] text-[12px] font-bold leading-[14px] text-[#008000]">15.46</output>
      </div>
    </fieldset>
  )
}

function ControlPanel() {
  return (
    <div className="flex items-start pb-[2px] pl-[144px] pt-[4px]">
      <ChannelGroup />
      <fieldset className="ml-[3px] h-[75px] w-[106px] rounded-[4px] border border-[#c6c4ca]">
        <legend className="ml-[6px] text-[11px] font-bold leading-[12px] text-[#000080]">Частота</legend>
        <div className="-mt-px">
          <Knob
            label="Частота"
            value="50К"
            pointer={-60}
            ticks={[-130, -45, 0, 45, 70, 130]}
            marks={[
              { text: '250К', x: 8, y: -28, anchor: 'middle' },
              { text: '100К', x: -16, y: -18, anchor: 'end' },
              { text: '333К', x: 17, y: -18, anchor: 'start' },
              { text: '500К', x: 25, y: -6, anchor: 'start' },
              { text: '1К', x: -21, y: 21, anchor: 'end' },
              { text: '1М', x: 21, y: 21, anchor: 'start' },
            ]}
          />
        </div>
      </fieldset>
      <div className="ml-[5px]"><SyncGroup /></div>
      <div className="ml-[5px]"><ControlGroup /></div>
    </div>
  )
}

export default function App() {
  return (
    <div className={`relative bg-white px-1 pt-1 text-black ${UI}`}>
      <div className="bg-[#ebe9ed]">
        <TitleBar />
        <MenuRow />
        <Tabs />
        <main className="flex border-b border-l border-[#808080]">
          <Toolbar />
          <div className="min-w-0 flex-1">
            <div className="border-r-2 border-[#707c70]"><Scope /></div>
            <ScrollRow />
            <button aria-label="Скрыть панель" className="ml-[280px] flex h-[7px] w-[408px] items-center border border-[#a6a4a8] px-[5px]">
              <Caret fill="#2c5aa8" />
              <span className="mx-[5px] flex-1 border-t border-dotted border-[#2c5aa8]" />
              <Caret fill="#2c5aa8" />
            </button>
            <ControlPanel />
          </div>
        </main>
        <footer className="flex gap-[3px] pt-[2px] text-[11px]">
          <div className="h-[17px] w-[190px] border-l border-t border-[#a6a4a8] pl-[3px] leading-[15px]">USB Осциллограф не подключен</div>
          <div className="h-[17px] flex-1 border-l border-t border-[#a6a4a8]" />
          <div className="h-[17px] w-[48px] border-l border-t border-[#a6a4a8] pl-[2px] leading-[15px]">1.5</div>
        </footer>
      </div>
      <div className="flex h-[4px] border-t border-[#2a56b0]">
        <div className="w-[84px] bg-[#58b878]" />
        <div className="flex-1 bg-[#74bcf4]" />
        <div className="w-[111px] bg-[#f4f8fc]" />
      </div>
      <a href="http://diamag-osc.com" className="absolute right-[14px] top-[20px] font-['Liberation_Sans',Arial,sans-serif] text-[20px] leading-[24px] text-[#000080]">
        http://diamag-osc.com
      </a>
    </div>
  )
}
